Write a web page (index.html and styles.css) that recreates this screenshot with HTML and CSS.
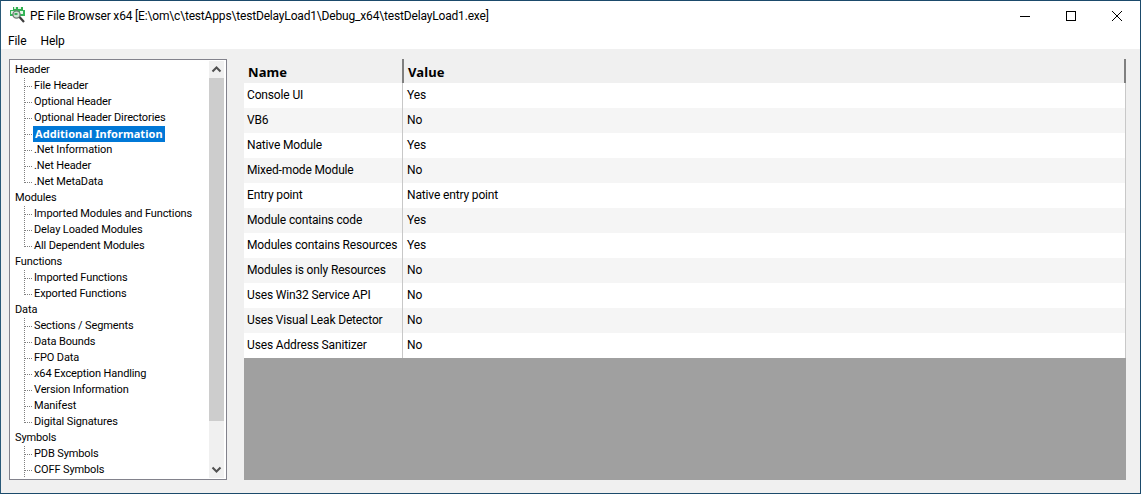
FILE: index.html
```html
<!DOCTYPE html>
<html lang="en">
<head>
<meta charset="utf-8">
<title>PE File Browser</title>
<link rel="stylesheet" href="styles.css">
</head>
<body>
<div class="window">
  <header class="titlebar">
    <svg class="appicon" width="18" height="18" viewBox="0 0 18 18">
      <rect x="4" y="1" width="10" height="3" fill="#2fae4e"/>
      <rect x="5" y="1" width="2" height="2" fill="#d8f0dc"/>
      <rect x="9" y="1" width="3" height="2" fill="#e6f5e8"/>
      <rect x="1" y="4" width="15" height="6" fill="#35b558"/>
      <rect x="2" y="5" width="4" height="3" fill="#dff3e3"/>
      <rect x="11" y="5" width="3" height="3" fill="#e9f7ec"/>
      <circle cx="7.5" cy="8.5" r="3.6" fill="#cfe3d4" stroke="#6f7a74" stroke-width="1.3"/>
      <rect x="5.5" y="7" width="3" height="2" fill="#3fae5c"/>
      <path d="M10.5 11l4.5 5" stroke="#3d3d3d" stroke-width="2.2"/>
    </svg>
    <span class="title">PE File Browser x64 [E:\om\c\testApps\testDelayLoad1\Debug_x64\testDelayLoad1.exe]</span>
    <div class="caption">
      <svg class="capbtn" width="46" height="29" viewBox="0 0 46 29"><path d="M18 15.5h10" stroke="#000" fill="none"/></svg>
      <svg class="capbtn" width="46" height="29" viewBox="0 0 46 29"><rect x="18.5" y="10.5" width="9" height="9" stroke="#000" fill="none"/></svg>
      <svg class="capbtn" width="46" height="29" viewBox="0 0 46 29"><path d="M18 10l10 10M28 10L18 20" stroke="#000" fill="none"/></svg>
    </div>
  </header>
  <nav class="menubar"><span class="menuitem">File</span><span class="menuitem">Help</span></nav>
  <main class="client">
    <aside class="treebox">
      <ul class="tree">
        <li class="node">Header</li>
        <li class="leaf">File Header</li>
        <li class="leaf">Optional Header</li>
        <li class="leaf">Optional Header Directories</li>
        <li class="leaf"><span class="selected">Additional Information</span></li>
        <li class="leaf">.Net Information</li>
        <li class="leaf">.Net Header</li>
        <li class="leaf last">.Net MetaData</li>
        <li class="node">Modules</li>
        <li class="leaf">Imported Modules and Functions</li>
        <li class="leaf">Delay Loaded Modules</li>
        <li class="leaf last">All Dependent Modules</li>
        <li class="node">Functions</li>
        <li class="leaf">Imported Functions</li>
        <li class="leaf last">Exported Functions</li>
        <li class="node">Data</li>
        <li class="leaf">Sections / Segments</li>
        <li class="leaf">Data Bounds</li>
        <li class="leaf">FPO Data</li>
        <li class="leaf">x64 Exception Handling</li>
        <li class="leaf">Version Information</li>
        <li class="leaf">Manifest</li>
        <li class="leaf last">Digital Signatures</li>
        <li class="node">Symbols</li>
        <li class="leaf">PDB Symbols</li>
        <li class="leaf">COFF Symbols</li>
      </ul>
      <div class="scrollbar">
        <svg class="arrow" width="15" height="17" viewBox="0 0 15 17"><path d="M3.5 10.5l4-4 4 4" stroke="#505050" stroke-width="2" fill="none"/></svg>
        <div class="thumb"></div>
        <div class="track"></div>
        <svg class="arrow" width="15" height="17" viewBox="0 0 15 17"><path d="M3.5 6.5l4 4 4-4" stroke="#505050" stroke-width="2" fill="none"/></svg>
      </div>
    </aside>
    <section class="listview">
      <div class="row head"><div class="cell name">Name</div><div class="cell value">Value</div></div>
      <div class="row"><div class="cell name">Console UI</div><div class="cell value">Yes</div></div>
      <div class="row alt"><div class="cell name">VB6</div><div class="cell value">No</div></div>
      <div class="row"><div class="cell name">Native Module</div><div class="cell value">Yes</div></div>
      <div class="row alt"><div class="cell name">Mixed-mode Module</div><div class="cell value">No</div></div>
      <div class="row"><div class="cell name">Entry point</div><div class="cell value">Native entry point</div></div>
      <div class="row alt"><div class="cell name">Module contains code</div><div class="cell value">Yes</div></div>
      <div class="row"><div class="cell name">Modules contains Resources</div><div class="cell value">Yes</div></div>
      <div class="row alt"><div class="cell name">Modules is only Resources</div><div class="cell value">No</div></div>
      <div class="row"><div class="cell name">Uses Win32 Service API</div><div class="cell value">No</div></div>
      <div class="row alt"><div class="cell name">Uses Visual Leak Detector</div><div class="cell value">No</div></div>
      <div class="row"><div class="cell name">Uses Address Sanitizer</div><div class="cell value">No</div></div>
      <div class="empty"></div>
    </section>
  </main>
</div>
</body>
</html>
```

FILE: styles.css
```css
* { box-sizing: border-box; }
html, body { margin: 0; padding: 0; }
body {
  width: 1141px;
  height: 494px;
  overflow: hidden;
  font-family: Roboto, "Noto Sans", sans-serif;
  font-size: 12px;
  color: #000;
  background: #fff;
}
.window {
  width: 1141px;
  height: 494px;
  display: flex;
  flex-direction: column;
  border: 1px solid #1b4a6b;
  border-left-color: #2a5a78;
}
.titlebar {
  height: 29px;
  flex: none;
  display: flex;
  align-items: center;
  background: #fff;
  padding-left: 8px;
}
.appicon { flex: none; margin-right: 3px; margin-top: -1px; }
.title { flex: 1; font-size: 12px; letter-spacing: -0.17px; white-space: nowrap; }
.caption { display: flex; flex: none; }
.capbtn { display: block; }
.menubar {
  height: 19px;
  flex: none;
  display: flex;
  align-items: center;
  background: #fff;
  padding: 2px 0 0 7px;
  gap: 14px;
  font-size: 12px;
  letter-spacing: -0.1px;
}
.client {
  flex: 1;
  min-height: 0;
  display: flex;
  align-items: flex-start;
  background: #f0f0f0;
  padding: 10px 14px 0 8px;
  gap: 17px;
}
.treebox {
  width: 218px;
  height: 421px;
  flex: none;
  display: flex;
  background: #fff;
  border: 1px solid #82828c;
  padding: 1px 2px 1px 1px;
}
.tree {
  flex: 1;
  list-style: none;
  margin: 0;
  padding: 1px 0 0 4px;
  overflow: hidden;
  font-size: 11px;
  letter-spacing: -0.12px;
}
.node, .leaf {
  height: 16px;
  line-height: 16px;
  white-space: nowrap;
}
.leaf {
  padding-left: 19px;
  background-image:
    repeating-linear-gradient(to right, #808080 0 1px, transparent 1px 2px),
    repeating-linear-gradient(to bottom, #808080 0 1px, transparent 1px 2px);
  background-repeat: no-repeat;
  background-size: 8px 1px, 1px 16px;
  background-position: 10px 8px, 9px 0;
}
.leaf.last {
  background-size: 8px 1px, 1px 9px;
}
.selected {
  display: block;
  width: max-content;
  height: 16px;
  line-height: 15px;
  padding: 0 2px;
  margin-left: -1px;
  background: #0078d7;
  color: #fff;
  font-family: "Noto Sans", sans-serif;
  font-weight: 700;
  letter-spacing: 0.05px;
}
.scrollbar {
  width: 15px;
  flex: none;
  display: flex;
  flex-direction: column;
  background: #f0f0f0;
}
.arrow { display: block; flex: none; }
.thumb { height: 343px; flex: none; background: #cdcdcd; }
.track { flex: 1; }
.listview {
  width: 882px;
  height: 421px;
  flex: none;
  display: flex;
  flex-direction: column;
  background: #a0a0a0;
}
.row {
  height: 25px;
  flex: none;
  display: flex;
  background: #fff;
}
.row.alt { background: #f5f5f5; }
.row.head {
  height: 24px;
  background: #f0f0f0;
  font-family: "Noto Sans", sans-serif;
  font-weight: 700;
  font-size: 13px;
}
.cell {
  display: flex;
  align-items: center;
  padding-bottom: 2px;
  letter-spacing: -0.15px;
  white-space: nowrap;
}
.name {
  width: 159px;
  padding-left: 3px;
  border-right: 1px solid #c8c8c8;
}
.value {
  flex: 1;
  padding-left: 4px;
  border-right: 1px solid #c8c8c8;
}
.head .cell { border-right: 2px solid #808080; padding: 1px 0 0 4px; letter-spacing: 0.1px; }
.head .name { width: 160px; }
.head .value { padding-left: 4px; }
.empty { flex: 1; background: #a0a0a0; }
```
